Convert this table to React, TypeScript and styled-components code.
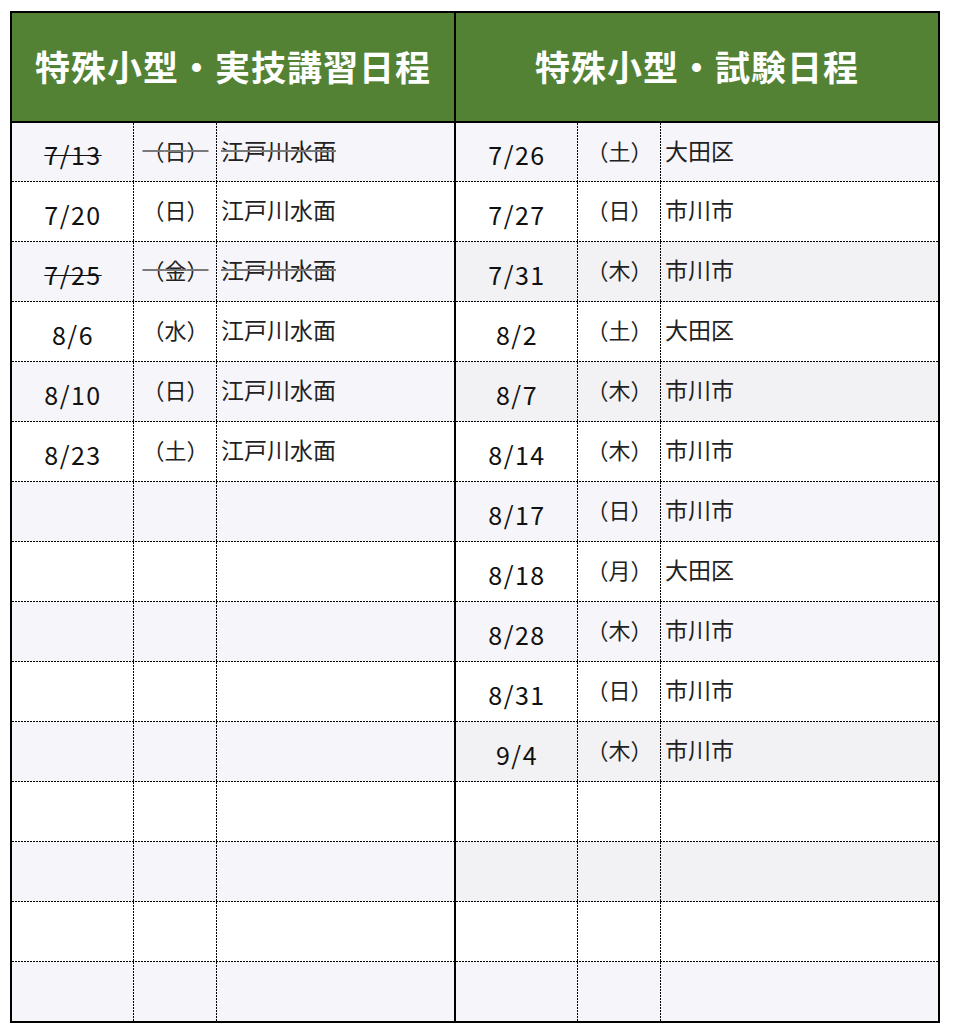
import styled, { createGlobalStyle } from 'styled-components'

const GlobalStyle = createGlobalStyle`
  html, body {
    margin: 0;
    padding: 0;
    background: #fff;
  }
  body {
    font-family: "Noto Sans CJK JP", "Noto Sans", sans-serif;
    color: #1a1a1a;
  }
`

const LINE = 'repeating-linear-gradient(var(--dir), #000 0 2px, transparent 2px 3px)'

const Table = styled.div`
  display: flex;
  box-sizing: border-box;
  width: 930px;
  margin: 11px 0 0 10px;
  border: 2px solid #000;
`

const Panel = styled.div<{ $wide?: boolean }>`
  display: flex;
  flex-direction: column;
  width: ${p => (p.$wide ? '482px' : '442px')};
  & + & {
    border-left: 2px solid #000;
  }
`

const Header = styled.div`
  box-sizing: border-box;
  height: 110px;
  padding-bottom: 4px;
  border-bottom: 2px solid #000;
  background: #548235;
  color: #fff;
  font-size: 35px;
  font-weight: 700;
  display: flex;
  align-items: center;
  justify-content: center;
  letter-spacing: 1px;
`

type Tone = 'white' | 'lavender' | 'gray'

const TONES: Record<Tone, string> = {
  white: '#ffffff',
  lavender: '#f6f5fa',
  gray: '#f2f1f4',
}

const Row = styled.div<{ $tone: Tone }>`
  --dir: to right;
  display: grid;
  grid-template-columns: 122px 83px 1fr;
  box-sizing: border-box;
  height: 60px;
  background-color: ${p => TONES[p.$tone]};
  background-image: ${LINE};
  background-size: 100% 1px;
  background-position: left bottom;
  background-repeat: no-repeat;

  &:first-child {
    height: 59px;
  }
  &:last-child {
    height: 59px;
    background-image: none;
  }
`

const Cell = styled.div<{ $divider?: boolean }>`
  --dir: to bottom;
  display: flex;
  align-items: center;
  min-width: 0;
  ${p =>
    p.$divider &&
    `
    background-image: ${LINE};
    background-size: 1px 100%;
    background-position: right top;
    background-repeat: no-repeat;
  `}
`

const DateCell = styled(Cell)`
  justify-content: center;
  padding-top: 3px;
  font-size: 25px;
  letter-spacing: 1.5px;
  color: #111;
`

const DayCell = styled(Cell)`
  justify-content: center;
  padding-bottom: 6px;
  font-size: 22px;
  color: #222;
`

const PlaceCell = styled(Cell)`
  padding-left: 4px;
  padding-bottom: 6px;
  font-size: 23px;
  color: #222;
`

const Struck = styled.span<{ $gray?: boolean }>`
  text-decoration: line-through;
  text-decoration-color: ${p => (p.$gray ? '#7a7a7a' : '#111')};
  text-decoration-thickness: ${p => (p.$gray ? '2px' : '1px')};
`

type Entry = {
  date?: string
  day?: string
  place?: string
  cancelled?: boolean
  tone: Tone
}

const TOTAL_ROWS = 15

const LESSONS: Omit<Entry, 'tone'>[] = [
  { date: '7/13', day: '日', place: '江戸川水面', cancelled: true },
  { date: '7/20', day: '日', place: '江戸川水面' },
  { date: '7/25', day: '金', place: '江戸川水面', cancelled: true },
  { date: '8/6', day: '水', place: '江戸川水面' },
  { date: '8/10', day: '日', place: '江戸川水面' },
  { date: '8/23', day: '土', place: '江戸川水面' },
]

const EXAMS: Omit<Entry, 'tone'>[] = [
  { date: '7/26', day: '土', place: '大田区' },
  { date: '7/27', day: '日', place: '市川市' },
  { date: '7/31', day: '木', place: '市川市' },
  { date: '8/2', day: '土', place: '大田区' },
  { date: '8/7', day: '木', place: '市川市' },
  { date: '8/14', day: '木', place: '市川市' },
  { date: '8/17', day: '日', place: '市川市' },
  { date: '8/18', day: '月', place: '大田区' },
  { date: '8/28', day: '木', place: '市川市' },
  { date: '8/31', day: '日', place: '市川市' },
  { date: '9/4', day: '木', place: '市川市' },
]

/** 右側は一部の行だけ少しグレー寄りの背景 */
const EXAM_GRAY_ROWS = [2, 4, 10, 12]

const fill = (items: Omit<Entry, 'tone'>[], toneOf: (i: number) => Tone): Entry[] =>
  Array(TOTAL_ROWS)
    .fill(0)
    .map((_, i) => ({ ...(items[i] || {}), tone: toneOf(i) }))

const lessonRows = fill(LESSONS, i => (i % 2 === 0 ? 'lavender' : 'white'))
const examRows = fill(EXAMS, i =>
  i % 2 === 1 ? 'white' : EXAM_GRAY_ROWS.includes(i) ? 'gray' : 'lavender'
)

const Schedule: React.FC<{ title: string; rows: Entry[]; wide?: boolean }> = ({ title, rows, wide }) => (
  <Panel $wide={wide}>
    <Header>{title}</Header>
    <div>
      {rows.map(({ date, day, place, cancelled, tone }, i) => (
        <Row $tone={tone} key={i}>
          <DateCell $divider>{date && (cancelled ? <Struck>{date}</Struck> : date)}</DateCell>
          <DayCell $divider>
            {day && (cancelled ? <Struck $gray>（{day}）</Struck> : `（${day}）`)}
          </DayCell>
          <PlaceCell>{place && (cancelled ? <Struck $gray>{place}</Struck> : place)}</PlaceCell>
        </Row>
      ))}
    </div>
  </Panel>
)

const App: React.FC = () => (
  <>
    <GlobalStyle />
    <Table>
      <Schedule title="特殊小型・実技講習日程" rows={lessonRows} />
      <Schedule title="特殊小型・試験日程" rows={examRows} wide />
    </Table>
  </>
)

export default App
